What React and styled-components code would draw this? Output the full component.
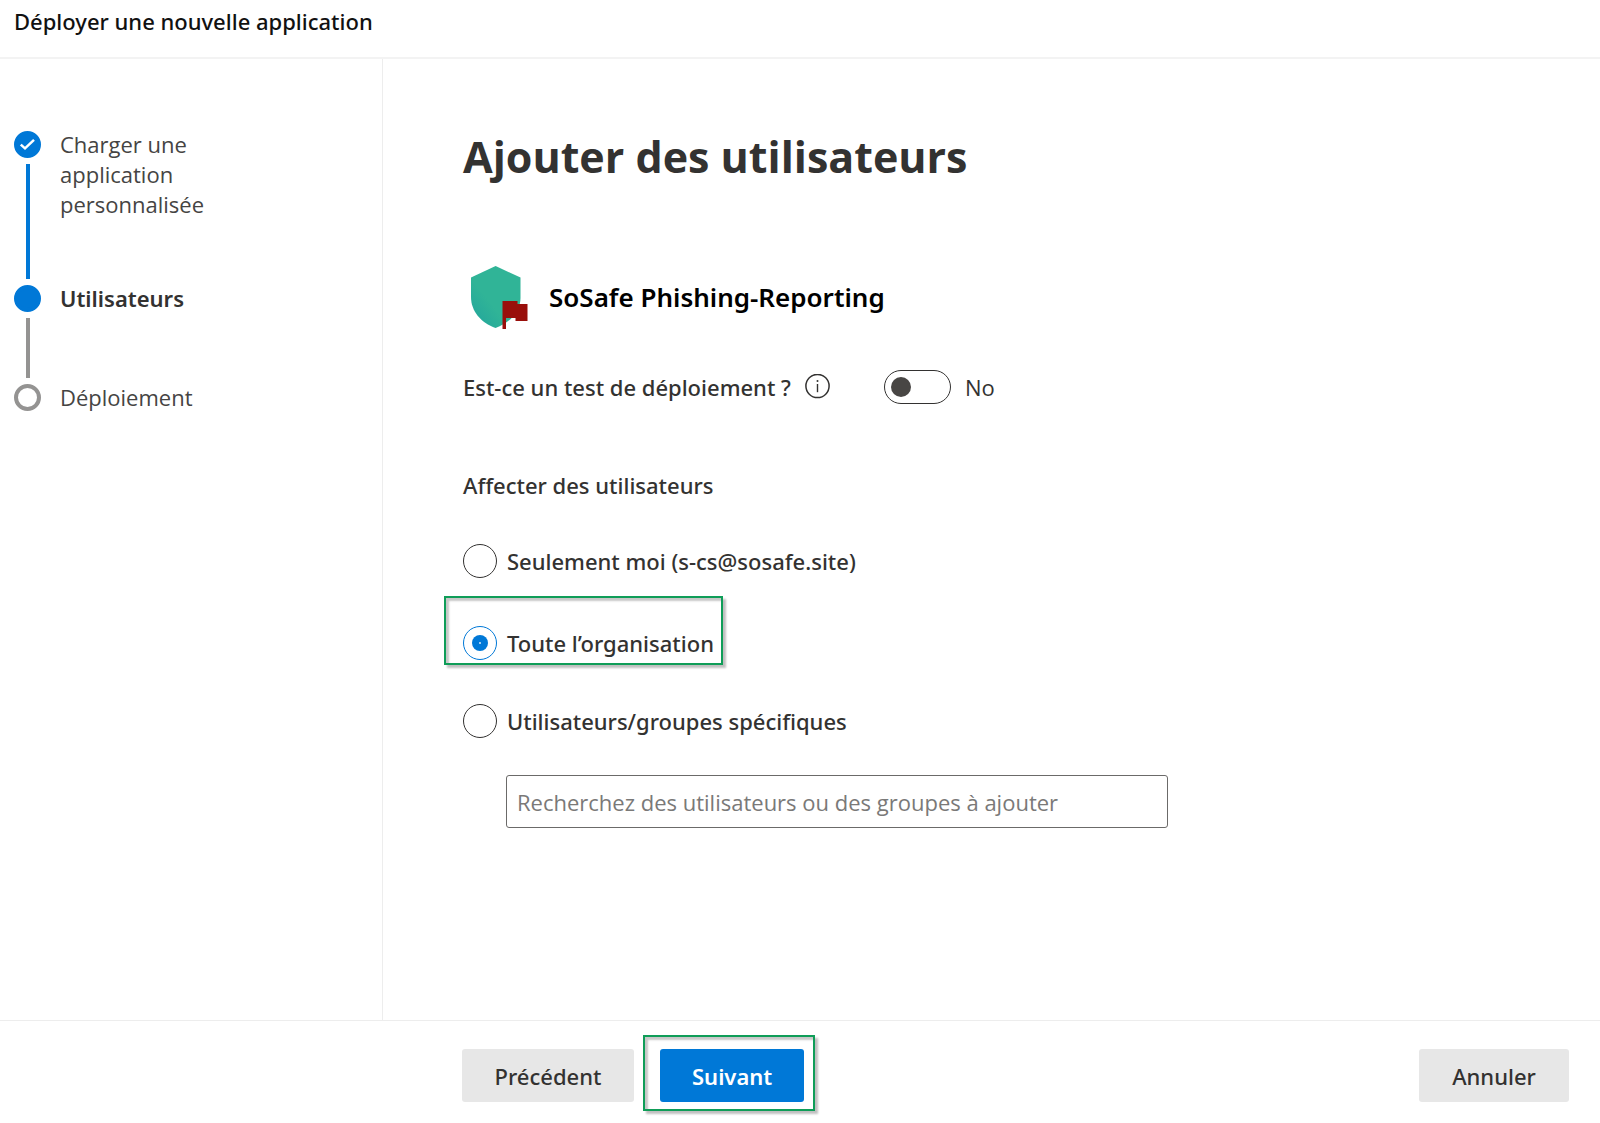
import React, { useState } from "react";
import styled, { createGlobalStyle, css } from "styled-components";

const blue = "#0078d7";
const ink = "#333231";
const grey = "#949392";
const rule = "#ededed";
const frameGreen = "#0f9d58";
const mediumFont = `"Noto Sans", "Open Sans", sans-serif`;

const GlobalStyle = createGlobalStyle`
  *, *::before, *::after { box-sizing: border-box; }
  body {
    margin: 0;
    background: #fff;
    color: ${ink};
    font-family: "Open Sans", "Noto Sans", sans-serif;
    font-size: 22px;
    line-height: 30px;
  }
  button, input { font: inherit; color: inherit; }
`;

const Page = styled.div`
  display: grid;
  grid-template-rows: auto 1fr auto;
  min-height: 100vh;
`;

const Header = styled.header`
  padding: 6px 14px 21px;
  border-bottom: 2px solid #f3f3f3;
  color: #111;
  font-family: ${mediumFont};
  font-weight: 500;
`;

const Body = styled.div`
  display: grid;
  grid-template-columns: 383px 1fr;
`;

const Sidebar = styled.nav`
  padding: 72px 14px 0;
  border-right: 1px solid ${rule};
`;

const Steps = styled.ol`
  margin: 0;
  padding: 0;
  list-style: none;
`;

const Step = styled.li`
  display: grid;
  grid-template-columns: 27px 160px;
  column-gap: 19px;
  min-height: ${(p) => p.$height}px;
`;

const Rail = styled.div`
  display: flex;
  flex-direction: column;
  align-items: center;
  gap: 6px;
  padding-bottom: 6px;
`;

const Marker = styled.span`
  display: grid;
  place-items: center;
  flex: none;
  width: 27px;
  height: 27px;
  border-radius: 50%;
  border: 4px solid ${(p) => (p.$pending ? grey : blue)};
  background: ${(p) => (p.$pending ? "#fff" : blue)};
`;

const Connector = styled.span`
  flex: 1;
  width: 4px;
  background: ${(p) => (p.$done ? blue : grey)};
`;

const StepLabel = styled.span`
  margin-top: -2px;
  color: ${(p) => (p.$current ? ink : "#454443")};
  font-family: ${(p) => (p.$current ? mediumFont : "inherit")};
  font-weight: ${(p) => (p.$current ? 600 : 400)};
`;

const Main = styled.main`
  padding: 68px 80px 40px;
`;

const Title = styled.h1`
  margin: 0 0 78px;
  font-size: 43px;
  line-height: 60px;
  font-weight: 700;
`;

const AppRow = styled.div`
  display: flex;
  align-items: center;
  gap: 21px;
  margin-bottom: 41px;
  padding-left: 8px;
`;

const AppName = styled.h2`
  margin: 0;
  color: #000;
  font-family: ${mediumFont};
  font-size: 26px;
  line-height: 32px;
  font-weight: 600;
`;

const TestRow = styled.div`
  display: flex;
  align-items: center;
  margin-bottom: 66px;
  font-family: ${mediumFont};
  font-weight: 500;
`;

const InfoButton = styled.button`
  display: flex;
  margin: 0 54px 0 14px;
  padding: 0;
  border: 0;
  background: none;
`;

const ToggleLabel = styled.label`
  display: flex;
  align-items: center;
  gap: 14px;
  font-family: "Open Sans", "Noto Sans", sans-serif;
  font-weight: 400;
`;

const Toggle = styled.input`
  appearance: none;
  display: flex;
  align-items: center;
  width: 67px;
  height: 34px;
  margin: 0;
  padding: 0 6px;
  border: 1px solid ${ink};
  border-radius: 17px;
  background: #fff;
  &::before {
    content: "";
    width: 20px;
    height: 20px;
    border-radius: 50%;
    background: #484644;
  }
  &:checked { justify-content: flex-end; }
`;

const Group = styled.fieldset`
  display: flex;
  flex-direction: column;
  align-items: flex-start;
  gap: 44px;
  margin: 0;
  padding: 0;
  border: 0;
  font-family: ${mediumFont};
  font-weight: 500;
`;

const Legend = styled.legend`
  margin-bottom: 44px;
  padding: 0;
`;

const frame = css`
  content: "";
  position: absolute;
  border: 2px solid ${frameGreen};
  box-shadow: 3px 3px 2px rgba(0, 0, 0, 0.25), inset 3px 3px 2px rgba(0, 0, 0, 0.22);
  pointer-events: none;
`;

const Option = styled.label`
  display: flex;
  align-items: center;
  gap: 10px;
  ${(p) =>
    p.$framed &&
    css`
      position: relative;
      margin-top: 4px;
      &::after {
        ${frame}
        inset: -30px -9px -5px -19px;
      }
    `}
`;

const Radio = styled.input`
  appearance: none;
  display: grid;
  place-items: center;
  width: 34px;
  height: 34px;
  margin: 0;
  border: 1px solid ${ink};
  border-radius: 50%;
  &:checked {
    border-color: ${blue};
  }
  &:checked::before {
    content: "";
    width: 16px;
    height: 16px;
    border-radius: 50%;
    background: radial-gradient(circle, #9fcdf2 1px, ${blue} 1px);
  }
`;

const Search = styled.input`
  display: block;
  width: 100%;
  max-width: 662px;
  height: 53px;
  margin: 37px 0 0 43px;
  padding: 0 10px;
  border: 1px solid #6b6a69;
  border-radius: 3px;
  &::placeholder {
    color: #7a7978;
    opacity: 1;
  }
`;

const Footer = styled.footer`
  display: flex;
  justify-content: space-between;
  padding: 28px 31px 21px 462px;
  border-top: 1px solid ${rule};
`;

const Actions = styled.div`
  display: flex;
  gap: 26px;
`;

const Framed = styled.div`
  position: relative;
  &::after {
    ${frame}
    inset: -14px -11px -9px -17px;
  }
`;

const Button = styled.button`
  min-width: ${(p) => p.$width}px;
  height: 53px;
  padding: 0 32px;
  border: 0;
  border-radius: 3px;
  background: ${(p) => (p.$primary ? blue : "#e7e7e7")};
  color: ${(p) => (p.$primary ? "#fff" : ink)};
  font-family: ${mediumFont};
  font-weight: ${(p) => (p.$primary ? 600 : 500)};
`;

function CheckIcon() {
  return (
    <svg width="17" height="13" viewBox="0 0 17 13" fill="none" aria-hidden="true">
      <path d="M1.8 6.6 L6 10.4 L15 1.9" stroke="#fff" strokeWidth="2.5" />
    </svg>
  );
}

function InfoIcon() {
  return (
    <svg width="25" height="26" viewBox="0 0 25 26" fill="none" aria-hidden="true">
      <circle cx="12.5" cy="12" r="11.6" stroke={ink} strokeWidth="1.5" />
      <path d="M12.5 10v8.2" stroke={ink} strokeWidth="1.4" />
      <circle cx="12.5" cy="7" r="1" fill={ink} />
    </svg>
  );
}

function ShieldLogo() {
  return (
    <svg width="57" height="64" viewBox="0 0 57 64" aria-hidden="true">
      <defs>
        <linearGradient id="shield" x1="0" y1="0.9" x2="0.35" y2="0.55">
          <stop offset="0" stopColor="#22a59c" />
          <stop offset="1" stopColor="#30b497" />
        </linearGradient>
      </defs>
      <path
        d="M24.6 1 L49.5 12.5 V33 C49.5 46 39 58 24.6 63 C10 58 0 46 0 32 V12.5 Z"
        fill="url(#shield)"
      />
      <path d="M31.5 36 H46.5 V39 H56.5 V56 H44.5 V53 H35 V64 H31.5 Z" fill="#990f0b" />
    </svg>
  );
}

const steps = [
  { label: "Charger une application personnalisée", state: "done", height: 154 },
  { label: "Utilisateurs", state: "current", height: 99 },
  { label: "Déploiement", state: "pending", height: 30 },
];

const options = [
  { id: "me", label: "Seulement moi (s-cs@sosafe.site)" },
  { id: "org", label: "Toute l’organisation", framed: true },
  { id: "groups", label: "Utilisateurs/groupes spécifiques" },
];

export default function App() {
  const [target, setTarget] = useState("org");
  const [test, setTest] = useState(false);

  return (
    <>
      <GlobalStyle />
      <Page>
        <Header>Déployer une nouvelle application</Header>
        <Body>
          <Sidebar>
            <Steps>
              {steps.map((s, i) => (
                <Step key={s.label} $height={s.height}>
                  <Rail>
                    <Marker $pending={s.state === "pending"}>
                      {s.state === "done" && <CheckIcon />}
                    </Marker>
                    {i < steps.length - 1 && <Connector $done={s.state === "done"} />}
                  </Rail>
                  <StepLabel $current={s.state === "current"}>{s.label}</StepLabel>
                </Step>
              ))}
            </Steps>
          </Sidebar>
          <Main>
            <Title>Ajouter des utilisateurs</Title>
            <AppRow>
              <ShieldLogo />
              <AppName>SoSafe Phishing-Reporting</AppName>
            </AppRow>
            <TestRow>
              <label htmlFor="test">Est-ce un test de déploiement ?</label>
              <InfoButton type="button" aria-label="Informations">
                <InfoIcon />
              </InfoButton>
              <ToggleLabel>
                <Toggle
                  id="test"
                  type="checkbox"
                  role="switch"
                  checked={test}
                  onChange={(e) => setTest(e.target.checked)}
                />
                {test ? "Yes" : "No"}
              </ToggleLabel>
            </TestRow>
            <Group>
              <Legend>Affecter des utilisateurs</Legend>
              {options.map((o) => (
                <Option key={o.id} $framed={o.framed}>
                  <Radio
                    type="radio"
                    name="target"
                    value={o.id}
                    checked={target === o.id}
                    onChange={() => setTarget(o.id)}
                  />
                  {o.label}
                </Option>
              ))}
            </Group>
            <Search
              type="text"
              aria-label="Rechercher des utilisateurs ou des groupes"
              placeholder="Recherchez des utilisateurs ou des groupes à ajouter"
            />
          </Main>
        </Body>
        <Footer>
          <Actions>
            <Button type="button" $width={172}>Précédent</Button>
            <Framed>
              <Button type="button" $primary $width={144}>Suivant</Button>
            </Framed>
          </Actions>
          <Button type="button" $width={150}>Annuler</Button>
        </Footer>
      </Page>
    </>
  );
}
